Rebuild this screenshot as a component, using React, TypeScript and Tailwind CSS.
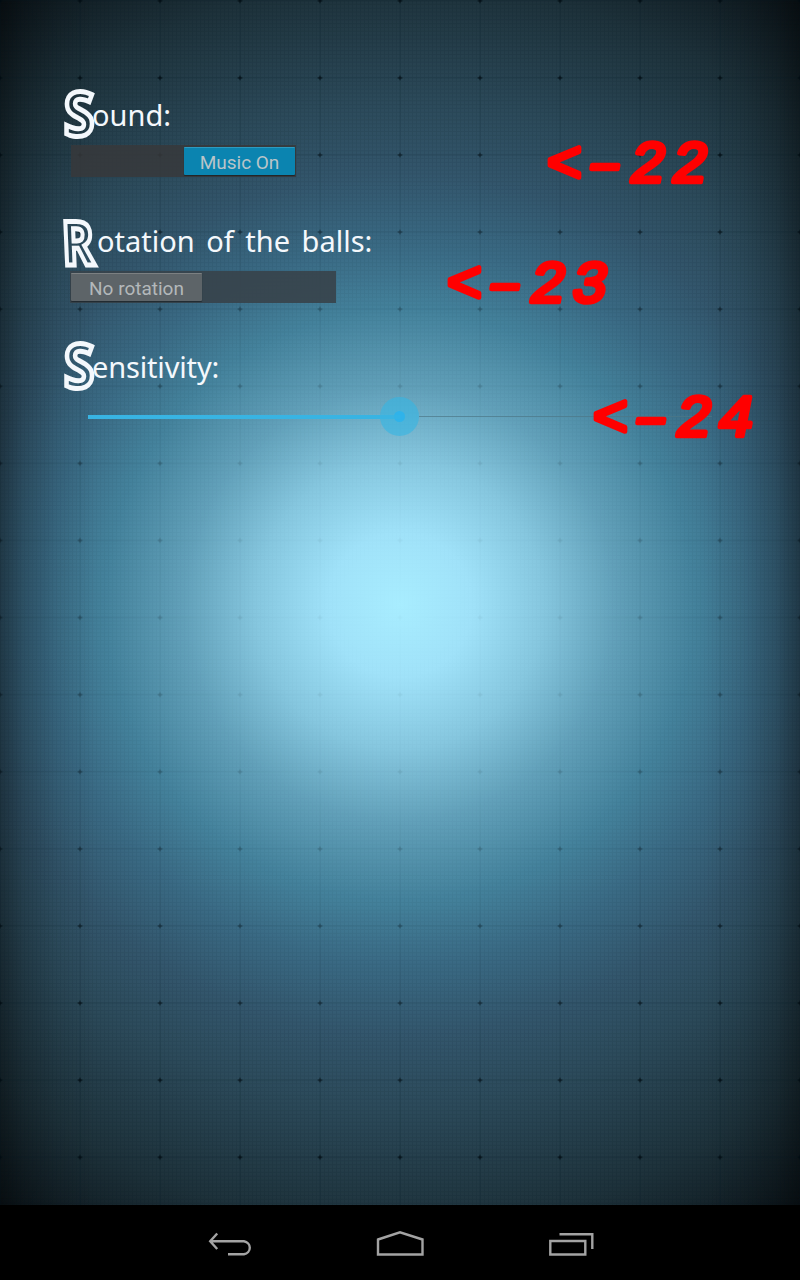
import type { ReactNode } from "react";

function Backdrop() {
  return (
    <svg className="absolute inset-0 h-[1205px] w-[800px]" viewBox="0 0 800 1205" aria-hidden="true">
      <defs>
        <radialGradient id="glow" gradientUnits="userSpaceOnUse" cx="400" cy="605" r="720">
          <stop offset="0" stopColor="#a8edff" />
          <stop offset="0.1" stopColor="#a0e2f9" />
          <stop offset="0.2" stopColor="#86c7df" />
          <stop offset="0.3" stopColor="#62a1ba" />
          <stop offset="0.41" stopColor="#44829c" />
          <stop offset="0.5" stopColor="#3a6a84" />
          <stop offset="0.6" stopColor="#33566c" />
          <stop offset="0.7" stopColor="#2c4a5a" />
          <stop offset="0.86" stopColor="#1e323b" />
          <stop offset="1" stopColor="#0d161b" />
        </radialGradient>
        <linearGradient id="sides">
          <stop offset="0" stopColor="#000" stopOpacity="0.4" />
          <stop offset="0.03" stopColor="#000" stopOpacity="0.2" />
          <stop offset="0.07" stopColor="#000" stopOpacity="0.07" />
          <stop offset="0.12" stopColor="#000" stopOpacity="0" />
          <stop offset="0.88" stopColor="#000" stopOpacity="0" />
          <stop offset="0.93" stopColor="#000" stopOpacity="0.07" />
          <stop offset="0.97" stopColor="#000" stopOpacity="0.2" />
          <stop offset="1" stopColor="#000" stopOpacity="0.4" />
        </linearGradient>
        <radialGradient id="fade" gradientUnits="userSpaceOnUse" cx="400" cy="605" r="560">
          <stop offset="0" stopColor="#fff" stopOpacity="0.02" />
          <stop offset="0.35" stopColor="#fff" stopOpacity="0.14" />
          <stop offset="1" stopColor="#fff" />
        </radialGradient>
        <mask id="gridMask" maskUnits="userSpaceOnUse" x="0" y="0" width="800" height="1205">
          <rect width="800" height="1205" fill="url(#fade)" />
        </mask>
        <pattern id="fine" width="4" height="3.855" patternUnits="userSpaceOnUse">
          <path d="M0 .5H4M.5 0V3.855" stroke="#00131c" strokeOpacity="0.1" />
        </pattern>
        <pattern id="coarse" x="-40" y="-37.8" width="80" height="77.1" patternUnits="userSpaceOnUse">
          <path d="M40 0V77.1M0 38.55H80" stroke="#00101a" strokeOpacity="0.18" />
          <path d="M40 36V41.1M37.5 38.55H42.5" stroke="#000a10" strokeOpacity="0.5" strokeWidth="1.4" />
          <circle cx="40" cy="38.55" r="1.6" fill="#000a10" fillOpacity="0.6" />
        </pattern>
      </defs>
      <rect width="800" height="1205" fill="url(#glow)" />
      <rect width="800" height="1205" fill="url(#sides)" />
      <g mask="url(#gridMask)">
        <rect width="800" height="1205" fill="url(#fine)" />
        <rect width="800" height="1205" fill="url(#coarse)" />
      </g>
    </svg>
  );
}

function Heading({ initial, children }: { initial: "S" | "R"; children: ReactNode }) {
  const shape =
    initial === "S"
      ? "-translate-x-px -translate-y-[1.5px] scale-x-[0.9]"
      : "-translate-x-[3px] translate-y-[2px] scale-x-[0.8] skew-x-3";
  return (
    <h2 className="flex h-[56px] items-start font-['Noto_Sans',sans-serif] text-[29px] leading-[58px] font-normal whitespace-pre text-[#f4f8fc]">
      <span className="w-[27px] shrink-0">
        <span
          className={`inline-block origin-left font-['Noto_Sans',sans-serif] text-[61px] leading-[56px] font-bold text-transparent [-webkit-text-stroke:5px_#f4f8fc] ${shape}`}
        >
          {initial}
        </span>
      </span>
      {children}
    </h2>
  );
}

function Note({ className, digits }: { className: string; digits: string }) {
  return (
    <svg
      className={`absolute h-[90px] w-[190px] fill-[#ff0000] stroke-[#ff0000] font-['Liberation_Mono',monospace] text-[60px] italic ${className}`}
      viewBox="0 -15 190 90"
      strokeWidth="4.6"
      strokeLinejoin="round"
      strokeLinecap="round"
    >
      <text x="6.5 47 90 132" y="52.3">
        {"<–" + digits}
      </text>
    </svg>
  );
}

export default function App() {
  return (
    <div className="relative flex h-[1280px] w-[800px] flex-col overflow-hidden bg-black">
      <Backdrop />
      <main className="relative flex h-[1205px] flex-col pt-[86px] pl-[65px]">
        <section className="h-[126px]">
          <Heading initial="S">ound:</Heading>
          <div className="mt-[3px] ml-[6px] flex h-[32px] w-[225px] justify-end bg-[#37383b]/85 p-px pt-[2px]">
            <button className="h-[28px] w-[111px] rounded-[1px] border-t border-[#2d9bc0] bg-[#0b84b0] font-[Roboto,sans-serif] text-[19px] leading-[29px] text-[#b9c4c9] shadow-[0_1px_1px_#0006]">
              Music On
            </button>
          </div>
        </section>
        <section className="h-[126px]">
          <Heading initial="R">
            <span className="pl-[5px] [word-spacing:4px]">otation of the balls:</span>
          </Heading>
          <div className="mt-[3px] ml-[5px] flex h-[32px] w-[266px] bg-[#37424a]/90 p-px pt-[2px]">
            <button className="h-[28px] w-[131px] rounded-[1px] border-t border-[#7b8082] bg-[#5d6468] font-[Roboto,sans-serif] text-[19px] leading-[29px] text-[#b3b8ba] shadow-[0_1px_1px_#0006]">
              No rotation
            </button>
          </div>
        </section>
        <section>
          <Heading initial="S">
            <span className="tracking-[-0.15px]">ensitivity:</span>
          </Heading>
          <div className="mt-[3px] ml-[23px] flex h-[39px] w-[624px] items-center">
            <div className="h-[4px] w-[292px] bg-[#38b4e3]" />
            <div className="relative flex h-[39px] w-[39px] items-center justify-center rounded-full bg-[#33b5e5]/60">
              <div className="absolute left-0 h-[4px] w-[20px] bg-[#33b5e5]/70" />
              <div className="h-[11px] w-[11px] rounded-full bg-[#2fb3ea]" />
            </div>
            <div className="h-px flex-1 bg-[#4d7888]/70" />
          </div>
        </section>
      </main>
      <Note className="top-[115px] left-[540px]" digits="22" />
      <Note className="top-[235px] left-[440px]" digits="23" />
      <Note className="top-[369px] left-[586px]" digits="24" />
      <nav className="relative flex h-[75px] items-center justify-center bg-black text-[#a3a3a3]">
        <svg className="h-[75px] w-[420px]" viewBox="190 1205 420 75" fill="none" stroke="currentColor" strokeWidth="2.4">
          <path d="M210 1241.3H244A7 6.6 0 0 1 244 1254.3H228M217.2 1233.5L210.2 1241.3L217.2 1249" />
          <path d="M378 1239.5L400 1232.3L422.5 1239.5V1254.5H378Z" />
          <path d="M550.3 1241H585.3V1254.5H550.3ZM559.5 1234.3H592.3V1249" />
        </svg>
      </nav>
    </div>
  );
}
